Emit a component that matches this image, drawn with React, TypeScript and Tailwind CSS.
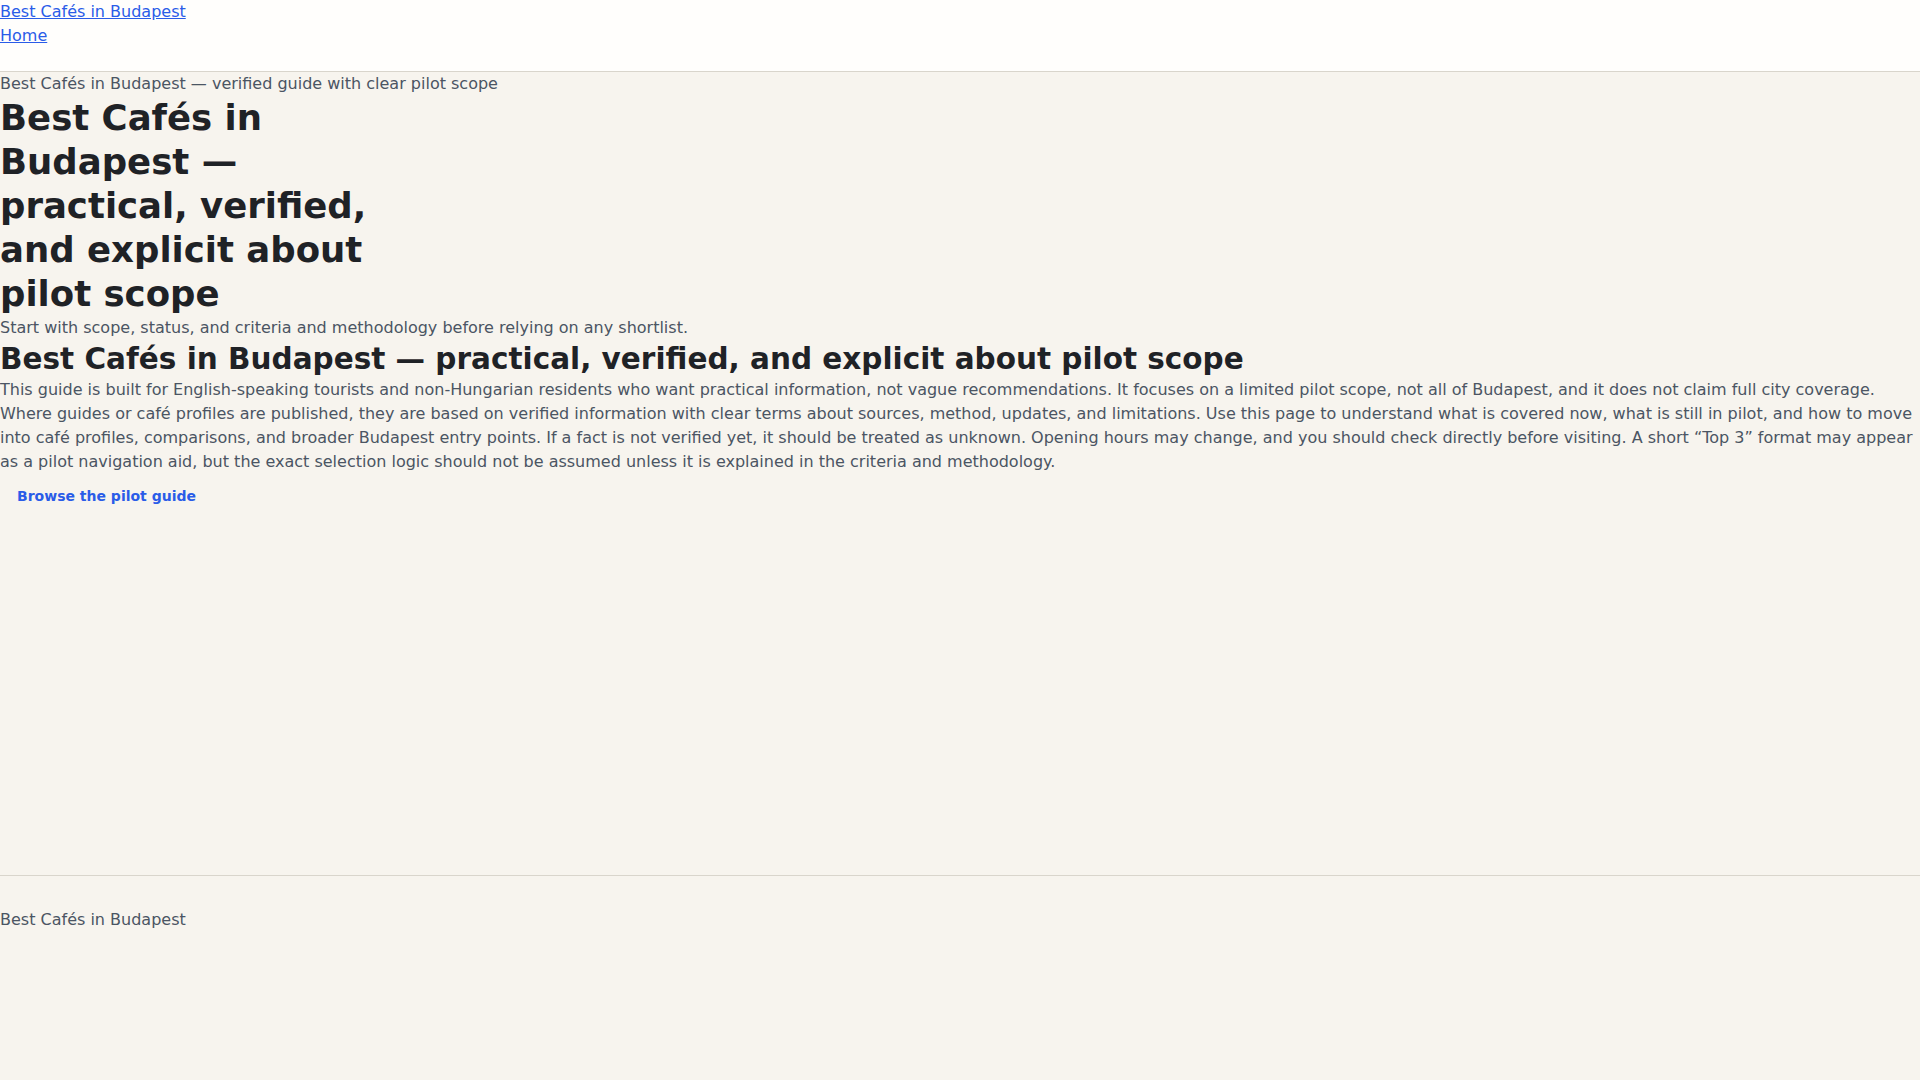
import React from 'react';

const font = { fontFamily: '"DejaVu Sans", "Noto Sans", sans-serif' };

const Header: React.FC = () => (
  <header className="bg-[#fffefc] border-b border-[#d9d5cc] pb-[23px]">
    <div>
      <a href="#" className="block text-base leading-6 text-[#2a5ce8] underline">
        Best Cafés in Budapest
      </a>
      <nav>
        <a href="#" className="block text-base leading-6 text-[#2a5ce8] underline">
          Home
        </a>
      </nav>
    </div>
  </header>
);

const Footer: React.FC = () => (
  <footer className="border-t border-[#d9d5cc] py-8">
    <p className="text-base leading-6 text-[#4b5563]">Best Cafés in Budapest</p>
  </footer>
);

export default function App() {
  return (
    <div className="min-h-screen bg-[#f7f4ee]" style={font}>
      <Header />

      <main className="min-h-[803px]">
        <section>
          <p className="text-base leading-6 text-[#4b5563]">
            Best Cafés in Budapest — verified guide with clear pilot scope
          </p>
          <h1 className="max-w-[420px] text-[35.5px] leading-[44px] font-bold text-[#1f2226]">
            Best Cafés in Budapest — practical, verified, and explicit about pilot scope
          </h1>
          <p className="text-base leading-6 text-[#4b5563]">
            Start with scope, status, and criteria and methodology before relying on any shortlist.
          </p>
        </section>

        <section>
          <h2 className="text-[29.5px] leading-[38px] font-bold text-[#1f2226]">
            Best Cafés in Budapest — practical, verified, and explicit about pilot scope
          </h2>
          <p className="text-base leading-6 text-[#4b5563]">
            This guide is built for English-speaking tourists and non-Hungarian residents who want
            practical information, not vague recommendations. It focuses on a limited pilot scope,
            not all of Budapest, and it does not claim full city coverage. Where guides or café
            profiles are published, they are based on verified information with clear terms about
            sources, method, updates, and limitations. Use this page to understand what is covered
            now, what is still in pilot, and how to move into café profiles, comparisons, and broader
            Budapest entry points. If a fact is not verified yet, it should be treated as unknown.
            Opening hours may change, and you should check directly before visiting. A short “Top 3”
            format may appear as a pilot navigation aid, but the exact selection logic should not be
            assumed unless it is explained in the criteria and methodology.
          </p>
          <a
            href="#"
            className="inline-block mt-1 px-[17px] py-2 text-sm leading-5 font-bold text-[#2a5ce8]"
          >
            Browse the pilot guide
          </a>
        </section>
      </main>

      <Footer />
    </div>
  );
}
